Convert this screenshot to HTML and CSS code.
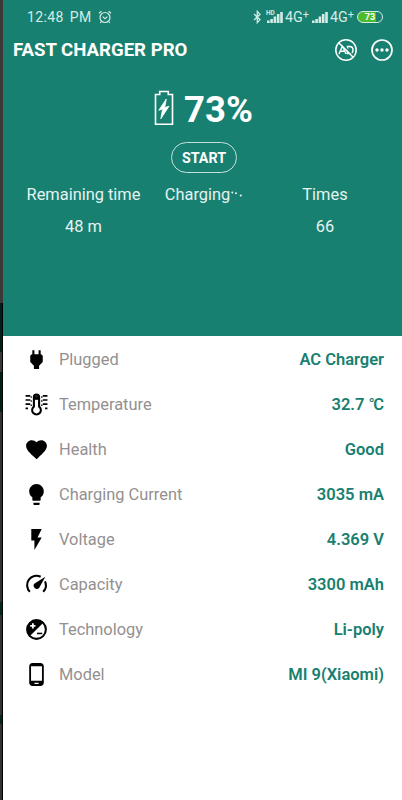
FILE: index.html
```html
<!DOCTYPE html>
<html lang="en">
<head>
  <meta charset="UTF-8">
  <title>Fast Charger Pro</title>
  <link rel="stylesheet" href="styles.css">
</head>
<body>
  <div class="edge"></div>
  <div class="phone">
    <header class="header">
      <div class="status">
        <span class="clock">12:48 PM</span>
        <svg class="alarm" width="14" height="14" viewBox="0 0 14 14" fill="none" stroke="currentColor" stroke-width="1.2">
          <circle cx="7" cy="7.5" r="5"/>
          <path d="M4.700 6.600 7 8.600l2.400-2M1 3.300 3.500 1.200M13 3.300 10.500 1.200M3.300 11.500 2.300 13M10.700 11.500l1 1.500"/>
        </svg>
        <div class="signals">
          <svg width="9" height="14" viewBox="0 0 9 14" fill="none" stroke="currentColor" stroke-width="1.300">
            <path d="M1 4l6 5.600L4.300 12.600V1.400L7 4.400 1 10"/>
          </svg>
          <div class="bars">
            <span class="hd">HD</span>
            <svg width="16" height="12" viewBox="0 0 16 12" fill="currentColor">
              <path d="M0 9.500h2.600V12H0zM3.300 8h2.600v4H3.300zM6.600 5.500h2.600V12H6.600zM9.900 3h2.600v9H9.900zM13.200 1h2.600v11h-2.600z"/>
            </svg>
          </div>
          <span class="net">4G<sup>+</sup></span>
          <svg class="bars-two" width="16" height="12" viewBox="0 0 16 12" fill="currentColor">
            <path d="M0 9.500h2.600V12H0zM3.300 8h2.600v4H3.300zM6.600 5.500h2.600V12H6.600zM9.900 3h2.600v9H9.900zM13.200 1h2.600v11h-2.600z"/>
          </svg>
          <span class="net">4G<sup>+</sup></span>
          <span class="battery">73</span>
        </div>
      </div>

      <div class="title-bar">
        <h1>FAST CHARGER PRO</h1>
        <svg width="24" height="24" viewBox="0 0 24 24" fill="none" stroke="currentColor" stroke-width="1.500">
          <circle cx="12" cy="12" r="10.200"/>
          <path d="M5 16l3.500-8 3.500 8M6.300 13.300h4.500M13.500 8.500v7h2c2.300 0 3.500-1.300 3.500-3.500s-1.200-3.500-3.500-3.500z"/>
          <path d="M6.500 4.500l13.300 13.300" stroke="#188070"/>
          <path d="M4.800 4.800l14.400 14.400"/>
        </svg>
        <svg width="24" height="24" viewBox="0 0 24 24" fill="none" stroke="currentColor" stroke-width="1.700">
          <circle cx="12" cy="12" r="10"/>
          <g fill="currentColor" stroke="none">
            <circle cx="7" cy="12" r="1.700"/>
            <circle cx="12" cy="12" r="1.700"/>
            <circle cx="17" cy="12" r="1.700"/>
          </g>
        </svg>
      </div>

      <div class="level">
        <svg width="20" height="36" viewBox="0 0 20 36" fill="none" stroke="currentColor" stroke-width="1.600">
          <path d="M1.500 4.500H5.700V1.500h8.600v3h4.200v29.800h-17z"/>
          <path d="M12.300 9 4.800 20.300l3.800-1.300-1.800 9.800 8.200-12.600-4.300 1.400z" fill="currentColor" stroke-width=".8"/>
        </svg>
        <span class="percent">73%</span>
      </div>
      <button class="start">START</button>

      <div class="stats">
        <div class="stat"><span>Remaining time</span><span>48 m</span></div>
        <div class="stat"><span class="charging">Charging<svg width="13" height="10" viewBox="0 0 13 10" fill="currentColor"><circle cx="2.300" cy="2.500" r="1"/><circle cx="6" cy="3.300" r="1"/><circle cx="10.800" cy="5.500" r="1.100"/></svg></span></div>
        <div class="stat"><span>Times</span><span>66</span></div>
      </div>
    </header>

    <ul class="info">
      <li>
        <svg viewBox="0 0 24 24"><path d="M16.010 7 16 3h-2v4h-4V3H8v4h-.010C7 6.990 6 7.990 6 8.990v5.490L9.500 18v3h5v-3l3.500-3.510v-5.500c0-1-1-2-1.990-1.990z"/></svg>
        <span class="name">Plugged</span><span class="value">AC Charger</span>
      </li>
      <li>
        <svg viewBox="0 0 24 24" fill="none" stroke="#000">
          <path d="M9.500 14V5a2.500 2.500 0 0 1 5 0v9a4.200 4.200 0 1 1-5 0z" stroke-width="2"/>
          <path d="M10 4.500h4V7h-4z" fill="#000"/>
          <path d="M1.500 3.700H6M1.500 7.700H6M1.500 11.700H6M18 3.700h4.500M18 7.700h4.500M18 11.700h4.500M1.500 15.700h2.300M20.200 15.700h2.300" stroke-width="1.600"/>
          <path d="M6.300 4.700h1.200M6.300 8.700h1.200M6.300 12.700h1.200M16.500 4.700h1.200M16.500 8.700h1.200M16.500 12.700h1.200" stroke-width="1.400"/>
        </svg>
        <span class="name">Temperature</span><span class="value">32.7 <span class="unit">°</span>C</span>
      </li>
      <li>
        <svg viewBox="0 0 24 24"><path d="M12 21.350l-1.450-1.320C5.400 15.360 2 12.280 2 8.500 2 5.420 4.420 3 7.500 3c1.740 0 3.410.81 4.500 2.090C13.090 3.810 14.760 3 16.500 3 19.580 3 22 5.420 22 8.500c0 3.780-3.400 6.860-8.550 11.540z"/></svg>
        <span class="name">Health</span><span class="value">Good</span>
      </li>
      <li>
        <svg viewBox="0 0 24 24"><path d="M9 21c0 .55.450 1 1 1h4c.55 0 1-.450 1-1v-1H9zm3-19C8.140 2 5 5.140 5 9c0 2.380 1.190 4.470 3 5.740V17c0 .55.450 1 1 1h6c.55 0 1-.450 1-1v-2.260c1.810-1.270 3-3.360 3-5.740 0-3.860-3.140-7-7-7z"/></svg>
        <span class="name">Charging Current</span><span class="value">3035 mA</span>
      </li>
      <li>
        <svg viewBox="0 0 24 24"><path d="M7 2v11h3v9l7-12h-4l4-8z"/></svg>
        <span class="name">Voltage</span><span class="value">4.369 V</span>
      </li>
      <li>
        <svg viewBox="0 0 24 24"><path d="M5.600 19A9 9 0 0 1 16 4.600M20.200 9A9 9 0 0 1 18.400 19" fill="none" stroke="#000" stroke-width="2"/><path d="M20.500 4.500l-6 10.800a3 3 0 1 1-4.300-4.200z"/></svg>
        <span class="name">Capacity</span><span class="value">3300 mAh</span>
      </li>
      <li>
        <svg viewBox="0 0 24 24"><circle cx="12" cy="12" r="9" fill="#fff" stroke="#000" stroke-width="2"/><path d="M5 19A10 10 0 0 1 19 5z"/><path d="M6 8.500h5M8.500 6v5" stroke="#fff" stroke-width="1.700"/><path d="M12.500 15.800h5" stroke="#000" stroke-width="1.500"/></svg>
        <span class="name">Technology</span><span class="value">Li-poly</span>
      </li>
      <li>
        <svg viewBox="0 0 24 24"><path d="M16 1H8C6.340 1 5 2.340 5 4v16c0 1.660 1.340 3 3 3h8c1.660 0 3-1.340 3-3V4c0-1.660-1.340-3-3-3zm-2 20h-4v-1h4v1zm3.250-3H6.750V4h10.500v14z"/></svg>
        <span class="name">Model</span><span class="value">MI 9(Xiaomi)</span>
      </li>
    </ul>
  </div>
</body>
</html>
```
FILE: styles.css
```css
* {
  box-sizing: border-box;
}
body {
  margin: 0;
  height: 800px;
  display: flex;
  overflow: hidden;
  font-family: Roboto, "Liberation Sans", sans-serif;
  background: #fff;
}
svg {
  display: block;
  flex: none;
}
.edge {
  width: 3px;
  flex: none;
  background:
    linear-gradient(transparent 303px, #000 303px) right / 1px 100% no-repeat,
    linear-gradient(#3b3838 303px, #00201b 303px, #00201b 352px, #383838 352px, #383838 372px, #00201b 372px, #00201b 412px, #333 412px, #333 602px, #00281f 602px, #00281f 615px, #333 615px, #333 715px, #00281f 715px, #00281f 724px, #333 724px);
}
.phone {
  flex: 1;
}
.header {
  height: 336px;
  background: #188070;
  color: #fff;
}
.status {
  height: 34px;
  padding: 0 19px 0 24px;
  display: flex;
  align-items: center;
  color: #d5ebe5;
}
.clock {
  font-size: 14px;
  letter-spacing: 0.4px;
  word-spacing: 2px;
}
.alarm {
  margin-left: 6px;
}
.signals {
  margin-left: auto;
  display: flex;
  align-items: center;
}
.bars {
  position: relative;
  margin: 0 2px 0 5px;
}
.hd {
  position: absolute;
  left: -1px;
  top: -1px;
  font-size: 6.5px;
  line-height: 6px;
  font-weight: bold;
}
.net {
  display: flex;
  font-size: 14.3px;
  line-height: 16px;
}
.net sup {
  font-size: 11px;
  line-height: 12px;
}
.bars-two {
  margin: 0 2px 0 3px;
}
.battery {
  width: 26px;
  height: 12px;
  margin-left: 3px;
  border: 1.5px solid #d5ebe5;
  border-radius: 6px;
  background: linear-gradient(90deg, #4cbb2c 76%, #188070 76%);
  color: #fff;
  font-size: 9px;
  line-height: 10px;
  font-weight: bold;
  text-align: center;
}
.title-bar {
  height: 32px;
  padding: 0 8px 0 10px;
  display: flex;
  align-items: center;
  gap: 12px;
}
h1 {
  margin: 0 auto 0 0;
  font-size: 18.6px;
  line-height: 24px;
}
.level {
  height: 36px;
  margin-top: 24px;
  padding-left: 2px;
  display: flex;
  justify-content: center;
  align-items: center;
  gap: 10px;
}
.percent {
  padding-top: 2px;
  font-size: 36.5px;
  font-weight: bold;
}
.start {
  display: block;
  width: 66px;
  height: 31px;
  margin: 16px 0 0 168px;
  padding: 0;
  border: 1.5px solid #c5e0db;
  border-radius: 16px;
  background: none;
  color: #fff;
  font: bold 14.3px Roboto, sans-serif;
}
.stats {
  display: grid;
  grid-template-columns: 161px 80px 1fr;
  margin-top: 6px;
  font-size: 16.4px;
  line-height: 32px;
  color: #e6f3f0;
}
.stat {
  display: flex;
  flex-direction: column;
  align-items: center;
}
.stat:last-child {
  padding-left: 4px;
}
.charging {
  display: flex;
}
.charging svg {
  margin-top: 11px;
}
.info {
  list-style: none;
  margin: 0;
  padding: 1px 18px 0 21px;
}
.info li {
  height: 45px;
  display: flex;
  align-items: center;
  font-size: 16.4px;
}
.info svg {
  width: 25px;
  height: 25px;
  margin-top: -1px;
}
.name {
  margin-left: 10px;
  color: #949090;
}
.value {
  margin-left: auto;
  font-size: 16.5px;
  font-weight: 600;
  color: #188070;
}
.unit {
  font-weight: 400;
  letter-spacing: -1.5px;
}
```
